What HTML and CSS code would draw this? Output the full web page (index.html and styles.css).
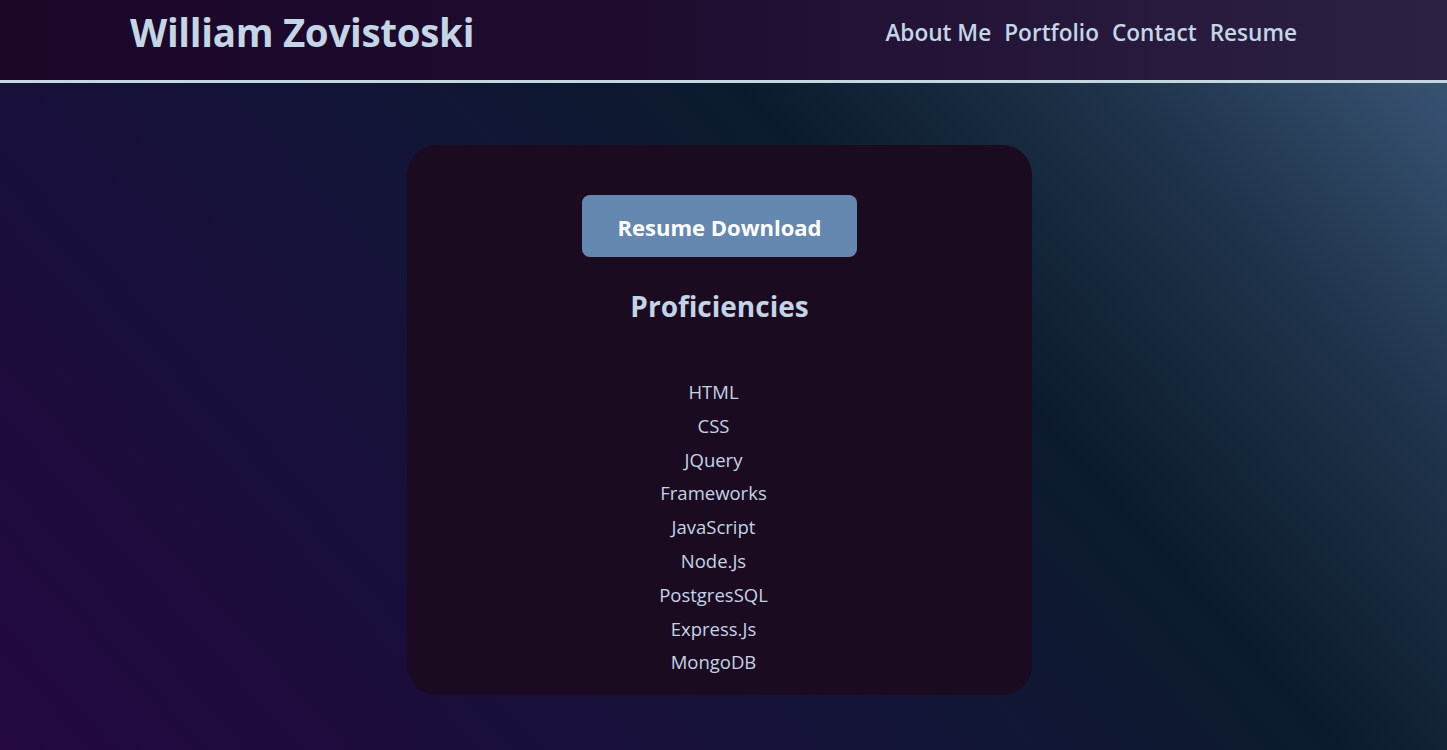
FILE: index.html
```html
<!DOCTYPE html>
<html lang="en">
<head>
<meta charset="utf-8">
<title>William Zovistoski - Resume</title>
<link rel="stylesheet" href="styles.css">
</head>
<body>
<header class="site-header">
  <h1 class="site-title">William Zovistoski</h1>
  <nav class="site-nav">
    <a href="#">About Me</a>
    <a href="#">Portfolio</a>
    <a href="#">Contact</a>
    <a href="#">Resume</a>
  </nav>
</header>
<main class="main">
  <section class="card">
    <a class="download-btn" href="#">Resume Download</a>
    <h2 class="card-title">Proficiencies</h2>
    <ul class="skills">
      <li>HTML</li>
      <li>CSS</li>
      <li>JQuery</li>
      <li>Frameworks</li>
      <li>JavaScript</li>
      <li>Node.Js</li>
      <li>PostgresSQL</li>
      <li>Express.Js</li>
      <li>MongoDB</li>
    </ul>
  </section>
</main>
</body>
</html>
```

FILE: styles.css
```css
* { box-sizing: border-box; }
html, body { height: 100%; }
body {
  margin: 0;
  font-family: "Open Sans", "Noto Sans", sans-serif;
  color: #c4d3e6;
  background: linear-gradient(48deg, #230841 0%, #1a0d3a 22%, #131438 42%, #0b1b2d 63%, #1e3249 80%, #3d5a7b 100%);
  min-height: 750px;
}
.site-header {
  height: 83px;
  display: flex;
  align-items: center;
  justify-content: space-between;
  padding: 0 150px 16px 130px;
  background: linear-gradient(to right, #1c0729 0%, #1d0a2d 40%, #271a3d 80%, #2c2142 100%);
  border-bottom: 3px solid #c4d6e0;
}
.site-title {
  margin: 0;
  font-size: 38.5px;
  font-weight: 700;
  color: #c4d6e6;
  letter-spacing: -0.3px;
}
.site-nav {
  display: flex;
  gap: 13px;
}
.site-nav a {
  color: #c4d6e6;
  text-decoration: none;
  font-size: 22.6px;
  font-weight: 600;
}
.main {
  display: flex;
  justify-content: center;
  padding: 62px 8px 0 0;
}
.card {
  width: 625px;
  height: 550px;
  border-radius: 30px;
  background: #1b0b20;
  display: flex;
  flex-direction: column;
  align-items: center;
  padding-top: 50px;
}
.download-btn {
  display: flex;
  align-items: center;
  justify-content: center;
  width: 275px;
  height: 62px;
  border-radius: 8px;
  background: #6588b0;
  color: #ffffff;
  text-decoration: none;
  font-size: 22px;
  font-weight: 700;
  padding-top: 1px;
}
.card-title {
  margin: 30px 0 0;
  font-size: 28px;
  font-weight: 700;
  color: #c4d3e6;
}
.skills {
  list-style: none;
  margin: 50px 0 0;
  padding: 0 12px 0 0;
  text-align: center;
}
.skills li {
  font-size: 18.5px;
  line-height: 33.8px;
  color: #c4d3e6;
}
```
